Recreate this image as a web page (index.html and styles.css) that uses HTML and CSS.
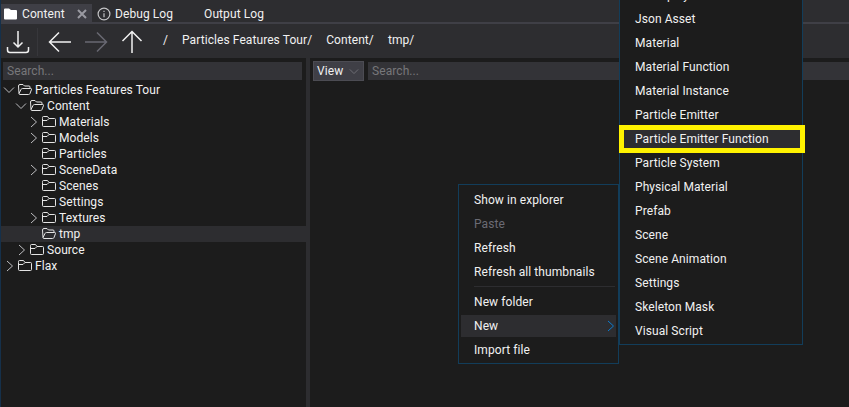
FILE: index.html
```html
<!DOCTYPE html>
<html lang="en">
<head>
<meta charset="utf-8">
<title>Content</title>
<link rel="stylesheet" href="styles.css">
</head>
<body>
<svg class="defs" aria-hidden="true">
  <symbol id="closed" viewBox="0 0 14 12"><path d="M.5 2.500V9.500q0 1 1 1h11q1 0 1-1V3.500q0-1-1-1H7L5.500.5h-4q-1 0-1 1ZM.5 4.500h4.500L7 2.500"/></symbol>
  <symbol id="open" viewBox="0 0 14 12"><path d="M1 9.500.5 2Q.5.5 2 .5h3L6.500 2H11q1 0 1 1v1.500M1 9.500 3 5.500q.4-1 1.500-1h8q1.300 0 1 1L12 9.500q-.3 1-1.500 1H2q-1 0-1-1Z"/></symbol>
  <symbol id="right" viewBox="0 0 8 12"><path d="M1 1l5.500 5L1 11"/></symbol>
  <symbol id="down" viewBox="0 0 12 8"><path d="M1 1.500l5 5 5-5"/></symbol>
</svg>
<div class="editor">
  <nav class="tabs">
    <div class="tab active">
      <svg class="folder-tab" viewBox="0 0 14 12"><path d="M0 1.500Q0 .5 1 .5h4L7 2h5q1 0 1 1v7.500q0 1-1 1H1q-1 0-1-1Z"/></svg>
      <span class="t-content">Content</span>
      <svg class="close" viewBox="0 0 10 10"><path d="M1 1l8 8M9 1L1 9"/></svg>
    </div>
    <div class="tab debug">
      <svg class="info" viewBox="0 0 14 14"><circle cx="7" cy="7" r="5.900"/><path d="M7 6.200v4M7 3.700v1.300"/></svg>
      <span>Debug Log</span>
    </div>
    <div class="tab output"><span>Output Log</span></div>
  </nav>
  <header class="toolbar">
    <svg class="import" viewBox="0 0 24 24"><path d="M12 1v16M7.500 12.500 12 17l4.500-4.500M1.500 17v3q0 2.500 2.500 2.500h16q2.500 0 2.500-2.500v-3"/></svg>
    <i class="divider"></i>
    <svg class="arrow" viewBox="0 0 24 24"><path d="M23 12H2M11 2.500 1.500 12l9.500 9.500"/></svg>
    <svg class="arrow dim" viewBox="0 0 24 24"><path d="M1 12h21M13 2.500l9.500 9.500-9.500 9.500"/></svg>
    <svg class="arrow" viewBox="0 0 24 24"><path d="M12 23V2M2.500 11 12 1.500l9.500 9.500"/></svg>
    <div class="crumbs"><span>/</span><span>Particles Features Tour/</span><span>Content/</span><span>tmp/</span></div>
  </header>
  <main class="panes">
    <aside class="tree-pane">
      <div class="search">Search...</div>
      <ul class="tree">
        <li class="d0"><svg class="chev-d"><use href="#down"/></svg><svg class="fold"><use href="#open"/></svg><span>Particles Features Tour</span></li>
        <li class="d1"><svg class="chev-d"><use href="#down"/></svg><svg class="fold"><use href="#open"/></svg><span>Content</span></li>
        <li class="d2"><svg class="chev-r"><use href="#right"/></svg><svg class="fold"><use href="#closed"/></svg><span>Materials</span></li>
        <li class="d2"><svg class="chev-r"><use href="#right"/></svg><svg class="fold"><use href="#closed"/></svg><span>Models</span></li>
        <li class="d2"><svg class="chev-r"></svg><svg class="fold"><use href="#closed"/></svg><span>Particles</span></li>
        <li class="d2"><svg class="chev-r"><use href="#right"/></svg><svg class="fold"><use href="#closed"/></svg><span>SceneData</span></li>
        <li class="d2"><svg class="chev-r"></svg><svg class="fold"><use href="#closed"/></svg><span>Scenes</span></li>
        <li class="d2"><svg class="chev-r"></svg><svg class="fold"><use href="#closed"/></svg><span>Settings</span></li>
        <li class="d2"><svg class="chev-r"><use href="#right"/></svg><svg class="fold"><use href="#closed"/></svg><span>Textures</span></li>
        <li class="d2 selected"><svg class="chev-r"></svg><svg class="fold"><use href="#open"/></svg><span>tmp</span></li>
        <li class="d1"><svg class="chev-r"><use href="#right"/></svg><svg class="fold"><use href="#closed"/></svg><span>Source</span></li>
        <li class="d0"><svg class="chev-r"><use href="#right"/></svg><svg class="fold"><use href="#closed"/></svg><span>Flax</span></li>
      </ul>
    </aside>
    <div class="splitter"></div>
    <section class="view-pane">
      <div class="view">View<svg class="view-chev" viewBox="0 0 12 8"><use href="#down" width="12" height="8"/></svg></div>
      <div class="search">Search...</div>
    </section>
  </main>
  <ul class="menu context">
    <li>Show in explorer</li>
    <li class="disabled">Paste</li>
    <li>Refresh</li>
    <li>Refresh all thumbnails</li>
    <li class="separator"></li>
    <li>New folder</li>
    <li class="hover">New<svg class="more"><use href="#right"/></svg></li>
    <li>Import file</li>
  </ul>
  <ul class="menu submenu">
    <li>Gameplay Globals</li>
    <li>Json Asset</li>
    <li>Material</li>
    <li>Material Function</li>
    <li>Material Instance</li>
    <li>Particle Emitter</li>
    <li class="hover marked">Particle Emitter Function</li>
    <li>Particle System</li>
    <li>Physical Material</li>
    <li>Prefab</li>
    <li>Scene</li>
    <li>Scene Animation</li>
    <li>Settings</li>
    <li>Skeleton Mask</li>
    <li>Visual Script</li>
  </ul>
</div>
</body>
</html>
```
FILE: styles.css
```css
* { box-sizing: border-box; }
body { margin: 0; background: #1c1c1c; color: #f1f1f1; font: 12px/16px Roboto, sans-serif; letter-spacing: .08px; }
ul { list-style: none; margin: 0; padding: 0; }
svg { flex: none; fill: none; stroke: #e4e4e4; stroke-width: 1; }
.defs { position: absolute; width: 0; height: 0; }
.editor { position: relative; width: 849px; height: 407px; overflow: hidden; display: flex; flex-direction: column; border-left: 1px solid #15304a; white-space: nowrap; }

.tabs { display: flex; height: 24px; padding-top: 4px; background: #2d2d30; border-bottom: 2px solid #3f3f46; }
.tab { display: flex; align-items: center; height: 20px; }
.tab.active { width: 91px; height: 18px; padding: 1px 0 0 3px; background: #3f3f46; }
.tab.debug { padding-left: 5px; }
.tab.output { padding-left: 31px; }
.folder-tab { width: 14px; height: 12px; margin-right: 4px; }
.folder-tab path { fill: #fff; stroke: none; }
.t-content { width: 55px; padding-top: 1px; }
.close { width: 10px; height: 10px; stroke: #9a9aa2; stroke-width: 2; }
.info { width: 14px; height: 14px; margin-right: 4px; stroke: #c4c4c6; stroke-width: 1.2; }

.toolbar { display: flex; align-items: center; height: 34px; padding: 2px 0 0 5px; background: #2d2d30; }
.import, .arrow { width: 24px; height: 24px; stroke: #f1f1f1; stroke-width: 1.5; }
.divider { width: 1px; height: 28px; margin: 0 10px 0 7px; background: #37373b; }
.arrow + .arrow { margin-left: 12px; }
.arrow.dim { stroke: #686872; }
.crumbs { display: flex; gap: 14px; margin: -4px 0 0 19px; }

.panes { display: flex; flex: 1; }
.tree-pane { width: 305px; padding-top: 4px; }
.search { height: 18px; padding: 1px 4px; background: #333337; color: #77777a; }
.tree-pane .search { margin: 0 4px 2px 2px; }
.tree li { display: flex; align-items: center; height: 16px; }
.tree .d0 { padding-left: 2px; }
.tree .d1 { padding-left: 14px; }
.tree .d2 { padding-left: 26px; }
.tree .selected { background: #2d2d30; }
.chev-d { width: 12px; height: 8px; margin-right: 3px; stroke: #bdbdc0; }
.chev-r { width: 8px; height: 12px; margin: 0 4px 0 3px; stroke: #bdbdc0; }
.fold { width: 14px; height: 12px; margin-right: 3px; }
.splitter { width: 4px; background: #2d2d30; }
.view-pane { display: flex; flex: 1; gap: 4px; padding: 3px 0 0 3px; }
.view { display: flex; align-items: center; justify-content: space-between; width: 51px; height: 20px; padding: 0 4px 0 3px; background: #3f3f46; border: 1px solid #4c4c53; }
.view-chev { width: 10px; height: 7px; stroke: #77777d; }
.view-pane .search { flex: 1; margin-top: 1px; }

.menu { position: absolute; background: #1c1c1c; border: 1px solid #123d5a; }
.menu li { display: flex; align-items: center; height: 22px; margin-bottom: 2px; padding-left: 13px; }
.menu .disabled { color: #6b6b74; }
.menu .hover { background: #2d2d30; }
.context { left: 457px; top: 184px; width: 161px; height: 180px; padding: 4px 2px; }
.menu .separator { height: 1px; margin: 3px 1px 4px 13px; padding: 0; background: #2d2d30; }
.more { width: 8px; height: 12px; margin-left: auto; margin-right: 1px; stroke: #0b7bce; }
.submenu { left: 618px; top: -20px; width: 184px; height: 365px; padding: 3px 2px; }
.submenu .marked { height: 28px; margin: -3px -5px -1px -3px; padding-left: 11px; border: 5px solid #fff200; position: relative; }
```
